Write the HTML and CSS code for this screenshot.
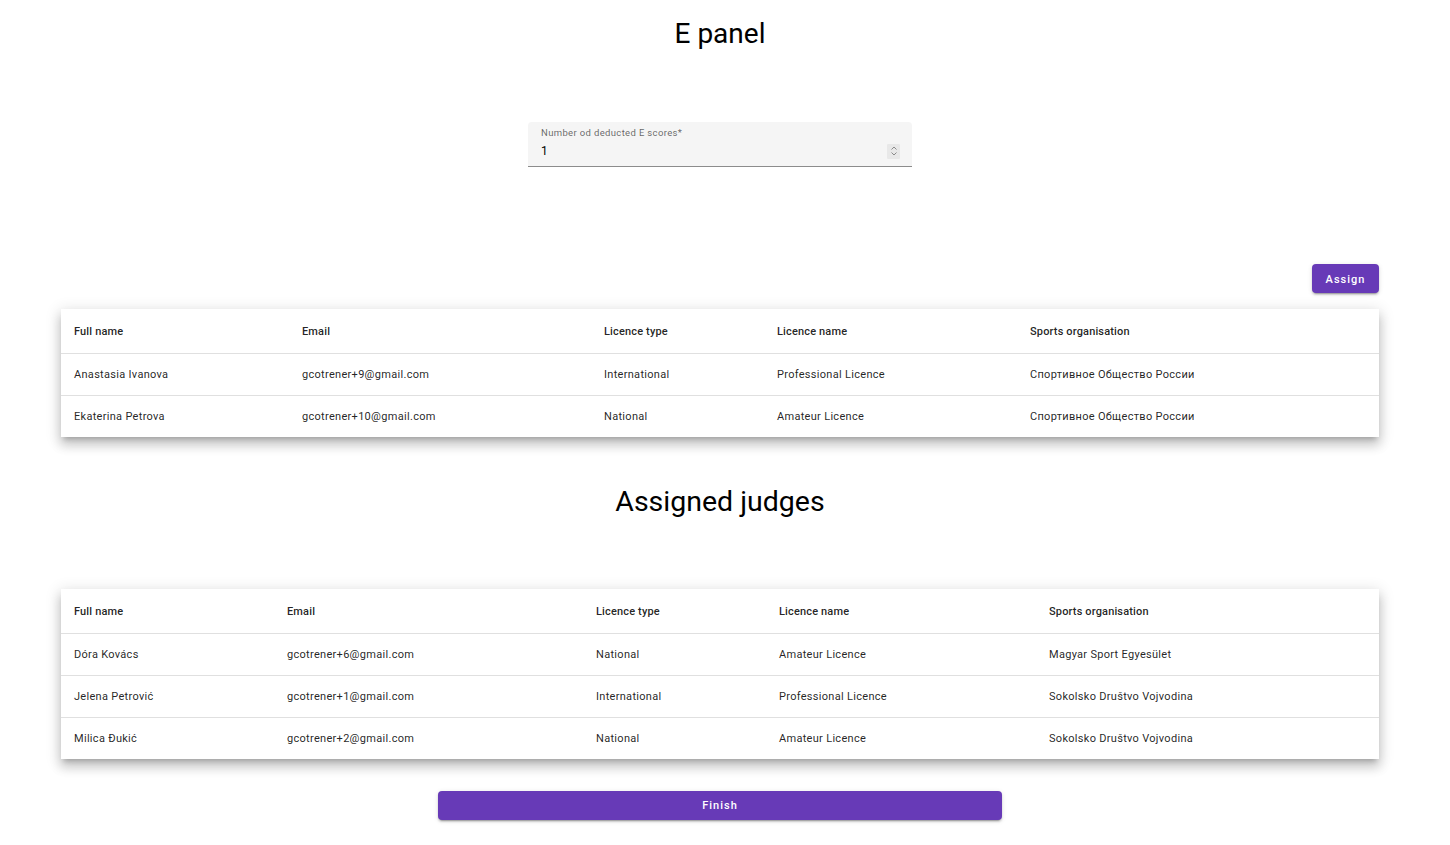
FILE: index.html
```html
<!DOCTYPE html>
<html lang="en">
<head>
<meta charset="utf-8">
<title>E panel</title>
<link rel="stylesheet" href="styles.css">
</head>
<body>
<main class="page">
  <h1 class="title">E panel</h1>

  <div class="field">
    <div class="field-label">Number od deducted E scores*</div>
    <div class="field-row">
      <span class="field-value">1</span>
      <span class="spinner">
        <svg width="12" height="14" viewBox="0 0 12 14"><path d="M3.5 5.5 L6 3 L8.5 5.5 M3.5 8.5 L6 11 L8.5 8.5" fill="none" stroke="#8a8a8a" stroke-width="1"/></svg>
      </span>
    </div>
  </div>

  <div class="actions">
    <button class="btn btn-assign">Assign</button>
  </div>

  <table class="grid grid-one">
    <colgroup>
      <col class="c1"><col class="c2"><col class="c3"><col class="c4"><col class="c5">
    </colgroup>
    <thead>
      <tr><th>Full name</th><th>Email</th><th>Licence type</th><th>Licence name</th><th>Sports organisation</th></tr>
    </thead>
    <tbody>
      <tr><td>Anastasia Ivanova</td><td>gcotrener+9@gmail.com</td><td>International</td><td>Professional Licence</td><td>Спортивное Общество России</td></tr>
      <tr><td>Ekaterina Petrova</td><td>gcotrener+10@gmail.com</td><td>National</td><td>Amateur Licence</td><td>Спортивное Общество России</td></tr>
    </tbody>
  </table>

  <h2 class="subtitle">Assigned judges</h2>

  <table class="grid grid-two">
    <colgroup>
      <col class="c1"><col class="c2"><col class="c3"><col class="c4"><col class="c5">
    </colgroup>
    <thead>
      <tr><th>Full name</th><th>Email</th><th>Licence type</th><th>Licence name</th><th>Sports organisation</th></tr>
    </thead>
    <tbody>
      <tr><td>Dóra Kovács</td><td>gcotrener+6@gmail.com</td><td>National</td><td>Amateur Licence</td><td>Magyar Sport Egyesület</td></tr>
      <tr><td>Jelena Petrović</td><td>gcotrener+1@gmail.com</td><td>International</td><td>Professional Licence</td><td>Sokolsko Društvo Vojvodina</td></tr>
      <tr><td>Milica Đukić</td><td>gcotrener+2@gmail.com</td><td>National</td><td>Amateur Licence</td><td>Sokolsko Društvo Vojvodina</td></tr>
    </tbody>
  </table>

  <div class="finish-row">
    <button class="btn btn-finish">Finish</button>
  </div>
</main>
</body>
</html>
```

FILE: styles.css
```css
html, body {
  margin: 0;
  padding: 0;
  background: #fff;
}
body {
  font-family: Roboto, "Liberation Sans", Arial, sans-serif;
  color: rgba(0, 0, 0, 0.87);
}
.page {
  width: 1440px;
  display: flex;
  flex-direction: column;
  align-items: center;
}
.title {
  margin: 17px 0 0;
  font-size: 28px;
  font-weight: 400;
  line-height: 34px;
  color: #000;
}
.subtitle {
  margin: 48px 0 0;
  font-size: 28.5px;
  font-weight: 400;
  line-height: 34px;
  color: #000;
}
.field {
  margin-top: 71px;
  width: 384px;
  box-sizing: border-box;
  height: 45px;
  background: #f5f5f5;
  border-radius: 4px 4px 0 0;
  border-bottom: 1px solid #8c8c8c;
  padding: 5px 13px 0 13px;
}
.field-label {
  font-size: 9.5px;
  line-height: 11px;
  color: rgba(0, 0, 0, 0.6);
  letter-spacing: 0.35px;
}
.field-row {
  display: flex;
  align-items: center;
  justify-content: space-between;
  height: 20px;
  margin-top: 3px;
}
.field-value {
  font-size: 12px;
  color: #000;
}
.spinner {
  display: flex;
  align-items: center;
  justify-content: center;
  width: 13px;
  height: 15px;
  background: #e8e8e8;
  border-radius: 1px;
  margin-right: -1px;
}
.actions {
  align-self: stretch;
  margin-top: 97px;
  padding: 0 61px;
  display: flex;
  justify-content: flex-end;
}
.btn {
  font-family: Roboto, "Liberation Sans", Arial, sans-serif;
  border: 0;
  background: #673ab7;
  color: #fff;
  font-size: 11px;
  font-weight: 500;
  letter-spacing: 1px;
  border-radius: 4px;
  height: 29px;
  padding-top: 1px;
  cursor: pointer;
  box-shadow: 0 3px 1px -2px rgba(0,0,0,.2), 0 2px 2px 0 rgba(0,0,0,.14), 0 1px 5px 0 rgba(0,0,0,.12);
}
.btn-assign {
  width: 67px;
  padding-left: 0;
  padding-right: 0;
  padding-top: 2px;
}
.grid {
  width: 1318px;
  border-collapse: collapse;
  table-layout: fixed;
  background: #fff;
  box-shadow: 0 5px 5px -3px rgba(0,0,0,.2), 0 8px 10px 1px rgba(0,0,0,.14), 0 3px 14px 2px rgba(0,0,0,.12);
  font-size: 11px;
}
.grid-one { margin-top: 16px; }
.grid-two { margin-top: 70px; }
.grid th, .grid td {
  text-align: left;
  padding: 0 13px;
  white-space: nowrap;
}
.grid th {
  height: 44px;
  font-weight: 500;
  letter-spacing: 0.15px;
  color: rgba(0, 0, 0, 0.87);
}
.grid td {
  height: 41px;
  border-top: 1px solid #e0e0e0;
  letter-spacing: 0.3px;
  color: rgba(0, 0, 0, 0.87);
}
.grid-one .c1 { width: 228px; }
.grid-one .c2 { width: 302px; }
.grid-one .c3 { width: 173px; }
.grid-one .c4 { width: 253px; }
.grid-one .c5 { width: 362px; }
.grid-two .c1 { width: 213px; }
.grid-two .c2 { width: 309px; }
.grid-two .c3 { width: 183px; }
.grid-two .c4 { width: 270px; }
.grid-two .c5 { width: 343px; }
.finish-row {
  margin-top: 32px;
  margin-bottom: 24px;
}
.btn-finish {
  width: 564px;
}
```
